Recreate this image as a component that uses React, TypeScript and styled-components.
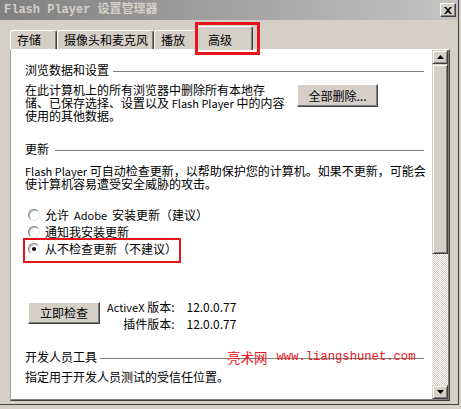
import React from 'react';
import styled, { createGlobalStyle, css } from 'styled-components';

const GlobalStyle = createGlobalStyle`
  html, body { margin: 0; padding: 0; background: #d4d0c8; }
  body {
    width: 461px; height: 409px; overflow: hidden;
    font-family: "Noto Sans CJK SC", sans-serif; color: #000;
  }
`;

const RED = '#e8141c';

const Window = styled.div`
  width: 459px; height: 405px; box-sizing: border-box;
  border-right: 1px solid #404040; border-bottom: 1px solid #404040;
  background: #d4d0c8;
  display: flex; flex-direction: column;
`;

const TitleBar = styled.div`
  height: 20px; flex: none; box-sizing: border-box;
  display: flex; align-items: center; justify-content: space-between;
  padding: 0 2px 0 4px;
  background: linear-gradient(to right, #808080, #c4c4c4);
`;

const Title = styled.span`
  font-family: "Liberation Mono", "Noto Sans CJK SC", monospace;
  font-weight: bold; font-size: 12px; line-height: 16px;
  color: #d4d0c8; white-space: pre;
`;

const CloseButton = styled.div`
  width: 16px; height: 14px; box-sizing: border-box;
  background: #d4d0c8;
  border: 1px solid; border-color: #fff #404040 #404040 #fff;
  box-shadow: inset -1px -1px #808080;
  display: flex; align-items: center; justify-content: center;
`;

const Body = styled.div`
  flex: 1; min-height: 0;
  display: flex; flex-direction: column;
  padding: 6px 8px 3px 10px;
`;

const TabStrip = styled.div`
  height: 23px; flex: none;
  display: flex; align-items: flex-end;
`;

const Tab = styled.div<{ $w: number; $active?: boolean }>`
  position: relative;
  width: ${p => p.$w}px; box-sizing: border-box;
  height: ${p => (p.$active ? 24 : 19)}px;
  margin-bottom: ${p => (p.$active ? -1 : 0)}px;
  z-index: ${p => (p.$active ? 2 : 0)};
  background: #d4d0c8;
  border-top: 1px solid #fff; border-left: 1px solid #fff; border-right: 1px solid #404040;
  border-radius: 3px 3px 0 0;
  box-shadow: inset -1px 0 #808080;
  padding-left: ${p => (p.$active ? 10 : 6)}px;
  padding-top: ${p => (p.$active ? 5 : 1)}px;
  font-size: 12px; line-height: 16px; white-space: nowrap;
  ${p => p.$active && css`
    &::after {
      content: '';
      position: absolute; top: -5px; left: -3px; right: -8px; bottom: -5px;
      border: 3px solid ${RED};
    }
  `}
`;

const Panel = styled.div`
  flex: 1; min-height: 0;
  display: flex;
  border: 1px solid; border-color: #fff #404040 #404040 #a0a0a0;
`;

const PanelInner = styled.div`
  flex: 1; min-width: 0;
  display: flex;
  border-right: 1px solid #808080; border-bottom: 1px solid #808080;
`;

const Content = styled.div`
  flex: 1; min-width: 0;
  background: #fff;
  padding: 13px 8px 0 14px;
  font-size: 12px;
`;

const Latin = styled.span`
  font-size: 11px;
`;

const SectionHeader = styled.div<{ $mt: number }>`
  position: relative;
  display: flex; align-items: center;
  margin-top: ${p => p.$mt}px;
  line-height: 14px; white-space: nowrap;
`;

const Rule = styled.div<{ $gap: number }>`
  flex: 1; height: 1px; background: #808080;
  margin: 2px 0 0 ${p => p.$gap}px;
`;

const Row = styled.div<{ $mt: number }>`
  display: flex; align-items: flex-start;
  margin-top: ${p => p.$mt}px;
`;

const Para = styled.div<{ $mt?: number; $w?: number }>`
  margin-top: ${p => p.$mt ?? 0}px;
  ${p => p.$w && css`width: ${p.$w}px; flex: none;`}
  display: flex; flex-direction: column;
  white-space: nowrap;
`;

const Line = styled.div`
  height: 13px; line-height: 13px;
`;

const Button = styled.button<{ $w: number; $h: number; $mt: number }>`
  width: ${p => p.$w}px; height: ${p => p.$h}px; flex: none;
  margin-top: ${p => p.$mt}px; padding: 0;
  box-sizing: border-box;
  background: #d4d0c8;
  border: 1px solid; border-color: #fff #404040 #404040 #fff;
  box-shadow: inset -1px -1px #808080;
  font-family: inherit; font-size: 12px; color: #000; line-height: 14px;
`;

const RadioGroup = styled.div`
  display: flex; flex-direction: column;
  margin-top: 16px;
`;

const RadioRow = styled.div<{ $highlight?: boolean }>`
  position: relative;
  width: fit-content; height: 17px;
  display: flex; align-items: center; gap: 5px;
  white-space: nowrap;
  ${p => p.$highlight && css`
    &::after {
      content: '';
      position: absolute; top: -2px; left: -2px; right: -4px; bottom: -6px;
      border: 2px solid ${RED};
    }
  `}
`;

const RadioCircle = styled.span<{ $checked?: boolean }>`
  width: 12px; height: 12px; box-sizing: border-box; flex: none;
  margin-left: 3px;
  border-radius: 50%;
  background: #fff;
  border: 1px solid; border-color: #808080 #e8e8e8 #e8e8e8 #808080;
  box-shadow: inset 1px 1px #c0c0c0;
  display: flex; align-items: center; justify-content: center;
  &::after {
    content: '';
    width: 4px; height: 4px; border-radius: 50%;
    background: ${p => (p.$checked ? '#000' : 'transparent')};
  }
`;

const VersionRow = styled.div`
  display: flex; align-items: flex-start; gap: 7px;
  margin: 41px 0 0 3px;
`;

const VersionGrid = styled.div`
  display: grid; grid-template-columns: auto auto;
  grid-auto-rows: 17px; column-gap: 12px; align-items: center;
  white-space: nowrap;
`;

const VersionLabel = styled.span`
  text-align: right;
`;

const Watermark = styled.span`
  position: absolute; left: 202px; top: -1px;
  display: flex; align-items: center; gap: 9px;
  color: ${RED}; line-height: 16px;
`;

const WatermarkCjk = styled.span`
  font-size: 13.5px;
`;

const WatermarkUrl = styled.span`
  font-family: "Liberation Mono", monospace; font-size: 12.2px;
`;

const ScrollBar = styled.div`
  width: 16px; flex: none;
  display: flex; flex-direction: column;
`;

const Bevel = css`
  box-sizing: border-box;
  background: #d4d0c8;
  border: 1px solid; border-color: #d4d0c8 #404040 #404040 #d4d0c8;
  box-shadow: inset 1px 1px #fff, inset -1px -1px #808080;
`;

const ScrollButton = styled.div`
  ${Bevel};
  height: 14px; flex: none;
  display: flex; align-items: center; justify-content: center;
`;

const ScrollThumb = styled.div`
  ${Bevel};
  height: 190px; flex: none;
`;

const ScrollTrack = styled.div`
  flex: 1;
  background: repeating-conic-gradient(#d4d0c8 0 25%, #ffffff 0 50%) 0 0 / 2px 2px;
`;

const CloseIcon = () => (
  <svg width="8" height="7" viewBox="0 0 8 7">
    <path d="M0 0h2l2 2 2-2h2L5 3.5 8 7H6L4 5 2 7H0l3-3.5z" fill="#000" />
  </svg>
);

const Arrow = ({ up }: { up?: boolean }) => (
  <svg width="7" height="4" viewBox="0 0 7 4">
    <path d={up ? 'M3.5 0L7 4H0z' : 'M0 0h7L3.5 4z'} fill="#000" />
  </svg>
);

export default function App() {
  return (
    <>
      <GlobalStyle />
      <Window>
        <TitleBar>
          <Title>Flash Player 设置管理器</Title>
          <CloseButton><CloseIcon /></CloseButton>
        </TitleBar>
        <Body>
          <TabStrip>
            <Tab $w={47}>存储</Tab>
            <Tab $w={97}>摄像头和麦克风</Tab>
            <Tab $w={43}>播放</Tab>
            <Tab $w={56} $active>高级</Tab>
          </TabStrip>
          <Panel>
            <PanelInner>
              <Content>
                <SectionHeader $mt={0}>
                  浏览数据和设置<Rule $gap={4} />
                </SectionHeader>
                <Row $mt={6}>
                  <Para $w={272}>
                    <Line>在此计算机上的所有浏览器中删除所有本地存</Line>
                    <Line>储、已保存选择、设置以及 <Latin>Flash Player</Latin> 中的内容</Line>
                    <Line>使用的其他数据。</Line>
                  </Para>
                  <Button $w={81} $h={23} $mt={1}>全部删除...</Button>
                </Row>

                <SectionHeader $mt={20}>
                  更新<Rule $gap={6} />
                </SectionHeader>
                <Para $mt={8}>
                  <Line><Latin>Flash Player</Latin> 可自动检查更新，以帮助保护您的计算机。如果不更新，可能会</Line>
                  <Line>使计算机容易遭受安全威胁的攻击。</Line>
                </Para>
                <RadioGroup>
                  <RadioRow><RadioCircle />允许 <Latin>Adobe</Latin> 安装更新（建议）</RadioRow>
                  <RadioRow><RadioCircle />通知我安装更新</RadioRow>
                  <RadioRow $highlight><RadioCircle $checked />从不检查更新（不建议）</RadioRow>
                </RadioGroup>

                <VersionRow>
                  <Button $w={72} $h={22} $mt={4}>立即检查</Button>
                  <VersionGrid>
                    <VersionLabel><Latin>ActiveX</Latin> 版本:</VersionLabel><span>12.0.0.77</span>
                    <VersionLabel>插件版本:</VersionLabel><span>12.0.0.77</span>
                  </VersionGrid>
                </VersionRow>

                <SectionHeader $mt={18}>
                  开发人员工具<Rule $gap={3} />
                  <Watermark>
                    <WatermarkCjk>亮术网</WatermarkCjk>
                    <WatermarkUrl>www.liangshunet.com</WatermarkUrl>
                  </Watermark>
                </SectionHeader>
                <Para $mt={6}>
                  <Line>指定用于开发人员测试的受信任位置。</Line>
                </Para>
              </Content>
              <ScrollBar>
                <ScrollButton><Arrow up /></ScrollButton>
                <ScrollThumb />
                <ScrollTrack />
                <ScrollButton><Arrow /></ScrollButton>
              </ScrollBar>
            </PanelInner>
          </Panel>
        </Body>
      </Window>
    </>
  );
}
